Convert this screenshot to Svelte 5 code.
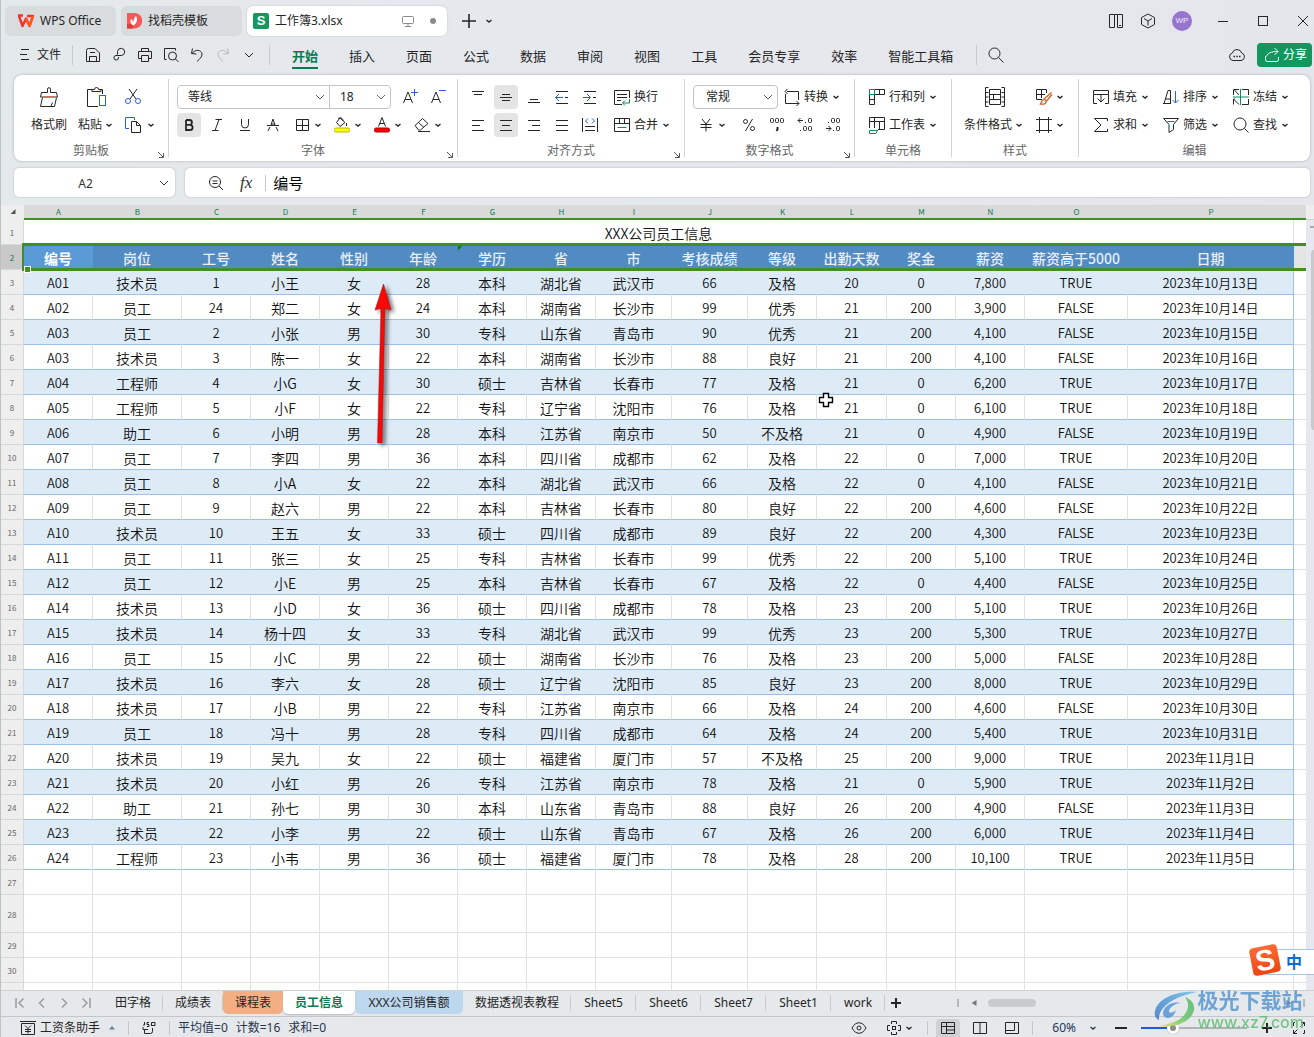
<script>
  // name: [width, height, inner markup]
  const icons = {
    chev: [12, 12, '<path stroke-width="1.400" d="M3.500 5L6 7l2.500-2"/>'],
    chevL: [14, 12, '<path d="M3 4l4 4 4-4"/>'],
    wps: [18, 14, '<path d="M1 1.500h5M2 2l3.500 10L9 4.500l3.500 7.500L16 2h-6" stroke="#f5302c" stroke-width="2.400" stroke-linejoin="round"/><path d="M9 4.500l3.500 7.500L16 2" stroke="#ff5a1c" stroke-width="2.400" stroke-linejoin="round"/>'],
    docer: [16, 16, '<path d="M1 0h7.500a7.500 7.500 0 0 1 0 15.500H1z" fill="#f5595a" stroke="none"/><path d="M1 11h6v4.500H1z" fill="#e03c3c" stroke="none"/><path d="M7.500 12.500c-3-1.500-3.500-4-2.500-6.500 1.500 1 2 2 2.500 3.500C7.500 7 8 4.500 10 3c2 3.500 1 7-2.500 9.500z" fill="#fff" stroke="none"/>'],
    monitor: [14, 14, '<rect x="1.500" y="2.500" width="11" height="7" rx="1"/><path d="M4 12.500h6M7 10v2"/>'],
    plus: [16, 16, '<path stroke-width="1.600" d="M8 1v14M1 8h14"/>'],
    plusS: [12, 12, '<path stroke-width="2" d="M6 1v10M1 6h10"/>'],
    minusS: [14, 12, '<path stroke-width="2" d="M1 6h12"/>'],
    panel: [16, 16, '<path d="M6.500 14.500h-5v-13h5zM9.500 14.500h5v-13h-5zM6.500 1.500h3M11 12.500h2"/>'],
    cube: [16, 16, '<path d="M8 1l6.500 3.500v7L8 15l-6.500-3.500v-7zM4 5.500L8 8l4-2.500M8 8v4.500"/>'],
    min: [12, 12, '<path d="M1 6.500h10"/>'],
    max: [12, 12, '<rect x="1.500" y="1.500" width="9" height="9"/>'],
    close: [12, 12, '<path d="M1 1l10 10M11 1L1 11"/>'],
    menu: [10, 12, '<path d="M1 .5h8M0 5.500h7M1 10.500h8"/>'],
    save: [16, 16, '<path d="M1.500 3.500v11h13V6L10 1.500H3.500a2 2 0 0 0-2 2zM4.500 14V9.500h7V14M5 5.500h5"/>'],
    link: [16, 16, '<path d="M6.500 7.500V4.500a3.600 3.600 0 1 1 3.500 4H5a2.300 2.300 0 1 0 2.500 2.500v-1"/>'],
    print: [16, 16, '<path d="M4.500 5V1.500h7V5M4.500 11.500h-3v-7h13v7h-3M4.500 8.500h7v6h-7z"/>'],
    preview: [16, 16, '<path d="M3.500 12.500h-2v-11h11v2"/><circle cx="9.500" cy="9" r="4"/><path d="M12.500 12l3 3"/>'],
    undo: [16, 16, '<path d="M3.500 1.500l-1 5 5 .5M3 6.500C6 2 12.500 2.500 13 7c.2 3-2.500 5-5 7.500"/>'],
    redo: [16, 16, '<path d="M12.500 1.500l1 5-5 .5M13 6.500C10 2 3.500 2.500 3 7c-.2 3 2.500 5 5 7.500"/>'],
    search: [16, 16, '<circle cx="6.500" cy="6.500" r="5.500"/><path d="M10.500 10.500l5 5"/>'],
    cloud: [18, 16, '<path d="M5 13.500a3.800 3.800 0 0 1-.8-7.400 5 5 0 0 1 9.600 0 3.800 3.800 0 0 1-.8 7.400z"/><path stroke-width="1.500" d="M5.500 9.500h1.500M8.300 9.500h1.500M11 9.500h1.500"/>'],
    share: [16, 16, '<path d="M1.500 9v3.500a2 2 0 0 0 2 2h9a2 2 0 0 0 2-2V10M2.500 9.500C3.500 6 7 4.500 14 4.500M10.500 1l3.500 3.500L10.500 8"/>'],
    brush: [20, 22, '<path d="M8.500 6.500V3.200a1.500 1.500 0 0 1 3 0v3.300h6l1 4.500H1.500l1-4.500zM3.500 11.500L1.500 20.500h14l2-9M12 20l1.500-3.500"/><path stroke="#d0703c" d="M5 10.500h10"/>'],
    paste: [22, 22, '<path d="M6 3.500H1.500v17H12M13 3.500h3.500V8M6 5.500v-2h2.500a2 2 0 0 1 4 0H15v2z"/><rect x="13.500" y="9.500" width="6" height="10" stroke="#2b5fe0"/>'],
    cut: [18, 18, '<path d="M5 1l7 10M13 1L6 11"/><g stroke="#2b5fe0"><circle cx="4" cy="13" r="2.500"/><circle cx="14" cy="13" r="2.500"/></g>'],
    copy: [18, 18, '<path stroke="#2b5fe0" d="M5 12.500H1.500v-11h9V4"/><path d="M7.500 5.500h5l4 4v7h-9zM12.500 5.500v4h4"/>'],
    bold: [18, 18, '<path stroke-width="1.800" d="M6 4v10h4a2.500 2.500 0 0 0 0-5.200H6M6 4h3.500a2.400 2.400 0 0 1 0 4.800"/>'],
    italic: [18, 18, '<path d="M7.500 3.500h6.500M4 14.500h6.500M11 3.500l-4 11"/>'],
    underline: [18, 18, '<path d="M5.500 3v5.500a3.500 3.500 0 0 0 7 0V3M4 14.500h10"/>'],
    strike: [18, 18, '<path d="M3 9.500h12M9 3L7 9M9 3l2 6M6 11l-2 4M12 11l2 4M7 8h4"/>'],
    border: [18, 18, '<path d="M3.500 3.500h12v11h-12zM9.500 3.500v11M3.500 9.500h12"/>'],
    fill: [18, 18, '<path d="M7 2l5 4.500-5 4L3.500 6.500zM5 3c2-2.500 5-1 5 2M13.500 7v3"/><rect x="1.500" y="12" width="15" height="4" rx="1.500" fill="#ffff00" stroke="#b8b800"/>'],
    color: [18, 18, '<path d="M5.500 10.500L9 1.500l3.500 9M6.800 7.500h4.500"/><rect x="1.500" y="12" width="15" height="4" rx="1.500" fill="#ff0000" stroke="#b00000"/>'],
    eraser: [18, 18, '<path d="M2 9.500L9.500 2.500l5.500 5-7.500 6.500H5.500zM5.500 6.500l5.500 5M5 15.500h12"/>'],
    aplus: [18, 18, '<path d="M2.500 15L7 4l4.500 11M4 11.500h6"/><path stroke="#2b5fe0" d="M10 4.500h7M13.500 1v7"/>'],
    aminus: [18, 18, '<path d="M2.500 15L7 4l4.500 11M4 11.500h6"/><path stroke="#2b5fe0" d="M10 2.500h7"/>'],
    top: [18, 18, '<path d="M3 3.500h12M5 6.500h8"/>'],
    middle: [18, 18, '<path d="M5 6.500h8M3 9.500h12M5 12.500h8"/>'],
    bottom: [18, 18, '<path d="M5 11.500h8M3 14.500h12"/>'],
    outdent: [18, 18, '<path d="M3 3.500h12M3 15.500h12M12 9.500h3"/><path stroke="#2b5fe0" d="M2.500 9.500H10M6 6L2.500 9.500 6 13"/>'],
    indent: [18, 18, '<path d="M3 3.500h12M3 15.500h12M12 9.500h3"/><path stroke="#2b5fe0" d="M2 9.500h7M6 6l3.500 3.500L6 13"/>'],
    left: [18, 18, '<path d="M3 4.500h12M3 9.500h8M3 14.500h12"/>'],
    center: [18, 18, '<path d="M3 4.500h12M5 9.500h8M3 14.500h12"/>'],
    right: [18, 18, '<path d="M3 4.500h12M7 9.500h8M3 14.500h12"/>'],
    justify: [18, 18, '<path d="M3 4.500h12M3 9.500h12M3 14.500h12"/>'],
    spread: [18, 18, '<path d="M1.500 2v14M16.500 2v14M4 10.500h10M4 14.500h10"/><path stroke="#2b5fe0" d="M7 2.500L4.500 5 7 7.500M11 2.500L13.500 5 11 7.500"/>'],
    wrap: [18, 18, '<path d="M9 16.500H1.500v-14h15V10M4 6.500h10M4 9.500h10M4 12.500h4"/><path stroke="#0f8a5f" d="M16.500 11v4H10M12 12.500L9.500 15l2.500 2.500"/>'],
    merge: [18, 18, '<path d="M1.500 2.500h15v13h-15zM1.500 7.500h15M6.500 2.500v5M11.500 2.500v5"/><path stroke="#0f8a5f" d="M4.500 11.500h9"/>'],
    convert: [18, 18, '<path d="M4 3.500h11.500V12M2.500 6v9.500H16M4.500 1L2 3.500 4.500 6M13.500 13l2.500 2.500-2.500 2.500"/>'],
    yen: [18, 18, '<path d="M5 3l4 5 4-5M9 8v7.500M3.500 8.500h11M3.500 11.500h11"/>'],
    percent: [18, 18, '<circle cx="5.500" cy="5.500" r="2"/><circle cx="12.500" cy="12.500" r="2"/><path d="M12.500 3l-7 12"/>'],
    thousands: [18, 18, '<rect x="2.500" y="2.500" width="3" height="4" rx="1"/><rect x="7.500" y="2.500" width="3" height="4" rx="1"/><rect x="12.500" y="2.500" width="3" height="4" rx="1"/><path stroke-width="2" d="M9.500 11v2.500l-1 1.500"/>'],
    decUp: [18, 18, '<path d="M2 4.500h5M4.500 2L2 4.500 4.500 7M9.500 6v1M4.500 14v1"/><rect x="12.500" y="2.500" width="3" height="4" rx="1"/><rect x="7.500" y="10.500" width="3" height="4" rx="1"/><rect x="12.500" y="10.500" width="3" height="4" rx="1"/>'],
    decDown: [18, 18, '<path d="M2 12.500h5M4.500 10L7 12.500 4.500 15M4.500 6v1M9.500 14v1"/><rect x="7.500" y="2.500" width="3" height="4" rx="1"/><rect x="12.500" y="2.500" width="3" height="4" rx="1"/><rect x="12.500" y="10.500" width="3" height="4" rx="1"/>'],
    rowcol: [18, 18, '<path d="M6.500 1.500h10v5h-10M11.500 1.500v5M1.500 6.500v10h5v-10M1.500 11.500h5"/><path stroke="#0f8a5f" d="M1.500 1.500h5v5h-5z"/>'],
    sheet: [18, 18, '<path d="M1.500 12V1.500h15v12H10M1.500 5.500h15M6.500 1.500V12M11.500 5.500v8"/><path stroke="#0f8a5f" d="M1.500 14.500h8l-1.500 3H1.500z"/>'],
    condfmt: [20, 20, '<path d="M3.500 .5h-3v19h3M.5 5.500h3M.5 10h3M.5 15h3M16.500 .5h3v19h-3M19.500 5.500h-3M19.500 10h-3M19.500 15h-3M4.500 2.500h11v5h-11zM4.500 7.500h4v5h-4zM8.500 7.500h7v5h-7zM4.500 12.500h11v5h-11z"/>'],
    tablestyle: [18, 18, '<path d="M7 11.500H1.500v-10h10V5M1.500 6.500H10M6.500 1.500V10"/><path stroke="#d0602c" stroke-width="1.300" d="M16.500 4.500L9 11l2.500 2L17 6.500M8.500 12c-2 0-1.500 2-3 4 3 .5 6 0 5.500-3"/>'],
    cellstyle: [18, 18, '<path d="M4.500 1v16M13.500 1v16M1 3.500h16M1 14.500h16"/>'],
    fillin: [18, 18, '<path d="M1.500 2.500h15v4h-15zM5 15.500H1.500v-9M13 15.500h3.500v-9M9 6.500V14M5.500 10.500L9 14l3.500-3.500"/>'],
    sum: [18, 18, '<path d="M15.500 5V2.500H2.500L9 9l-6.500 6.500h13V13"/>'],
    sort: [18, 18, '<path d="M2 15.500L6 2.500H8.500v13M3.500 11h5M1 15.500h8"/><path stroke="#2b5fe0" d="M13.500 3v12M10.500 12l3 3 3-3"/>'],
    filter: [18, 18, '<path d="M1.500 2.500h15L11.500 8.500v5L7 16.500v-8z"/><path stroke="#0f8a5f" d="M5.500 5.500h7"/>'],
    freeze: [18, 18, '<path d="M7 1.500H2l5 5.500M1.500 1.500V7M1.500 11v5.500M7 16.500L1.500 11H3M10 1.500h6.500V7M16.500 11v5.500H10"/><path stroke="#0f8a5f" d="M8.500 1v16M1 9h16"/>'],
    find: [18, 18, '<circle cx="8" cy="8" r="6"/><path d="M12.500 12.500l4 4"/>'],
    launch: [8, 8, '<path d="M1 1l5 5M6.500 2v4.500H2"/>'],
    zoomout: [16, 16, '<circle cx="7" cy="7" r="5.500"/><path d="M4.500 6h5M4.500 8.500h5M11 11l4 4"/>'],
    first: [12, 12, '<path stroke-width="1.500" d="M2 1v10M9.500 1.500L5 6l4.500 4.500"/>'],
    prev: [12, 12, '<path stroke-width="1.500" d="M8 1.500L3.500 6 8 10.500"/>'],
    next: [12, 12, '<path stroke-width="1.500" d="M4 1.500L8.500 6 4 10.500"/>'],
    last: [12, 12, '<path stroke-width="1.500" d="M10 1v10M2.500 1.500L7 6l-4.500 4.500"/>'],
    triL: [6, 8, '<path fill="currentColor" stroke="none" d="M5.500 1v6L.5 4z"/>'],
    triR: [6, 8, '<path fill="currentColor" stroke="none" d="M.5 1v6l5-3z"/>'],
    triU: [8, 6, '<path fill="#6a7fa8" stroke="none" d="M1 4.500h6L4 1z"/>'],
    pay: [16, 14, '<path d="M0 .5h16M1.500 2.500h13v11h-13zM5 4.500l3 3 3-3M8 7.500v5M5 8.500h6M5 10.500h6"/>'],
    script: [16, 14, '<path d="M3.500 1v3H2M8 1.500H6v2h2v2H6M10.500 5V1.500H14v3h-3M2 8.500h5M2 6v2.500M3.500 8.500v4h6a2 2 0 0 0 2-2V7"/>'],
    eye: [16, 14, '<path d="M1 7c3.500-7 10.500-7 14 0-3.500 7-10.500 7-14 0z"/><circle cx="8" cy="7" r="2"/>'],
    focus: [14, 14, '<rect x="5.500" y="5.500" width="3" height="3"/><path d="M4.500 3V.5h5V3M4.500 11v2.500h5V11M3 4.500H.5v5H3M11 4.500h2.500v5H11"/>'],
    normal: [14, 12, '<path d="M.5 .5h13v11H.5zM.5 4.500h13M5.500 .5v11M5.500 8h8"/>'],
    pages: [14, 12, '<path d="M.5 .5h13v11H.5zM7 .5v11"/>'],
    breaks: [14, 12, '<path d="M.5 .5h13v11H.5zM.5 8.500h9v-8"/>'],
    full: [14, 14, '<path d="M9 1.500h3.500V5M12.500 1.500l-4 4M1.500 9v3.500H5M1.500 12.500l4-4M1.500 5V1.500H3M12.500 9v3.500H11"/>'],
    corner: [8, 8, '<path fill="#555" stroke="none" d="M6.500 1v5h-5z"/>'],
  };

  const menus = ['开始', '插入', '页面', '公式', '数据', '审阅', '视图', '工具', '会员专享', '效率', '智能工具箱'];
  const quick = [['save', '保存'], ['link', '链接'], ['print', '打印'], ['preview', '打印预览'], ['undo', '撤销'], ['redo', '恢复'], ['chevL', '更多']];
  const edits = [
    ['fillin', '填充'], ['sort', '排序'], ['freeze', '冻结'],
    ['sum', '求和'], ['filter', '筛选'], ['find', '查找'],
  ];

  const cols = 'ABCDEFGHIJKLMNOP'.split('');
  const heads = ['编号', '岗位', '工号', '姓名', '性别', '年龄', '学历', '省', '市', '考核成绩', '等级', '出勤天数', '奖金', '薪资', '薪资高于5000', '日期'];
  const rows = `A01 技术员 1 小王 女 28 本科 湖北省 武汉市 66 及格 20 0 7,800 TRUE 2023年10月13日
A02 员工 24 郑二 女 24 本科 湖南省 长沙市 99 优秀 21 200 3,900 FALSE 2023年10月14日
A03 员工 2 小张 男 30 专科 山东省 青岛市 90 优秀 21 200 4,100 FALSE 2023年10月15日
A03 技术员 3 陈一 女 22 本科 湖南省 长沙市 88 良好 21 200 4,100 FALSE 2023年10月16日
A04 工程师 4 小G 女 30 硕士 吉林省 长春市 77 及格 21 0 6,200 TRUE 2023年10月17日
A05 工程师 5 小F 女 22 专科 辽宁省 沈阳市 76 及格 21 0 6,100 TRUE 2023年10月18日
A06 助工 6 小明 男 28 本科 江苏省 南京市 50 不及格 21 0 4,900 FALSE 2023年10月19日
A07 员工 7 李四 男 36 本科 四川省 成都市 62 及格 22 0 7,000 TRUE 2023年10月20日
A08 员工 8 小A 女 22 本科 湖北省 武汉市 66 及格 22 0 4,100 FALSE 2023年10月21日
A09 员工 9 赵六 男 22 本科 吉林省 长春市 80 良好 22 200 4,600 FALSE 2023年10月22日
A10 技术员 10 王五 女 33 硕士 四川省 成都市 89 良好 22 200 4,300 FALSE 2023年10月23日
A11 员工 11 张三 女 25 专科 吉林省 长春市 99 优秀 22 200 5,100 TRUE 2023年10月24日
A12 员工 12 小E 男 25 本科 吉林省 长春市 67 及格 22 0 4,400 FALSE 2023年10月25日
A14 技术员 13 小D 女 36 硕士 四川省 成都市 78 及格 23 200 5,100 TRUE 2023年10月26日
A15 技术员 14 杨十四 女 33 专科 湖北省 武汉市 99 优秀 23 200 5,300 TRUE 2023年10月27日
A16 员工 15 小C 男 22 硕士 湖南省 长沙市 76 及格 23 200 5,000 FALSE 2023年10月28日
A17 技术员 16 李六 女 28 硕士 辽宁省 沈阳市 85 良好 23 200 8,000 TRUE 2023年10月29日
A18 技术员 17 小B 男 22 专科 江苏省 南京市 66 及格 24 200 4,600 FALSE 2023年10月30日
A19 员工 18 冯十 男 28 专科 四川省 成都市 64 及格 24 200 5,400 TRUE 2023年10月31日
A20 技术员 19 吴九 女 22 硕士 福建省 厦门市 57 不及格 25 200 9,000 TRUE 2023年11月1日
A21 技术员 20 小红 男 26 专科 江苏省 南京市 78 及格 21 0 5,900 TRUE 2023年11月2日
A22 助工 21 孙七 男 30 本科 山东省 青岛市 88 良好 26 200 4,900 FALSE 2023年11月3日
A23 技术员 22 小李 男 22 硕士 山东省 青岛市 67 及格 26 200 6,000 TRUE 2023年11月4日
A24 工程师 23 小韦 男 36 硕士 福建省 厦门市 78 及格 28 200 10,100 TRUE 2023年11月5日`
    .split('\n')
    .map((line) => line.split(' '));
  const blanks = [27, 28, 29, 30, ''];
  const plain = /^[\dA-Z,]+$|日$/;

  const sheets = [
    ['田字格', ''], ['成绩表', ''], ['课程表', 'orange'], ['员工信息', 'current'],
    ['XXX公司销售额', 'blue long'], ['数据透视表教程', 'long'],
    ['Sheet5', 'latin'], ['Sheet6', 'latin'], ['Sheet7', 'latin'], ['Sheet1', 'latin'], ['work', ''],
  ];
</script>

{#snippet icon(name)}
  <svg class="icon" width={icons[name][0]} height={icons[name][1]} viewBox="0 0 {icons[name][0]} {icons[name][1]}" fill="none" stroke="currentColor" aria-hidden="true">{@html icons[name][2]}</svg>
{/snippet}

{#snippet tool(name, label, on = false)}
  <button class="sq" class:on aria-label={label}>{@render icon(name)}</button>
{/snippet}

{#snippet drop(name, label)}
  <button class="drop" aria-label={label}>{@render icon(name)}{@render icon('chev')}</button>
{/snippet}

{#snippet text(name, label, arrow = true)}
  <button class="tool">{@render icon(name)}<span>{label}</span>{#if arrow}{@render icon('chev')}{/if}</button>
{/snippet}

<div class="app">
  <header class="title">
    <button class="doc home">{@render icon('wps')}<span>WPS Office</span></button>
    <button class="doc docer">{@render icon('docer')}<span>找稻壳模板</span></button>
    <button class="doc active"><b class="slogo">S</b><span class="name">工作簿3.xlsx</span>{@render icon('monitor')}<i class="dot"></i></button>
    <button class="bare new" aria-label="新建">{@render icon('plus')}</button>
    <button class="bare" aria-label="新建菜单">{@render icon('chev')}</button>
    <div class="window">
      <button class="bare" aria-label="侧栏">{@render icon('panel')}</button>
      <button class="bare" aria-label="应用">{@render icon('cube')}</button>
      <button class="avatar">WP</button>
      <div class="controls">
        <button class="bare" aria-label="最小化">{@render icon('min')}</button>
        <button class="bare" aria-label="最大化">{@render icon('max')}</button>
        <button class="bare" aria-label="关闭">{@render icon('close')}</button>
      </div>
    </div>
  </header>

  <nav class="menubar">
    <button class="file">{@render icon('menu')}<span>文件</span></button>
    <i class="sep"></i>
    <div class="quick">
      {#each quick as [name, label]}
        <button class="bare" class:dim={name === 'redo'} aria-label={label}>{@render icon(name)}</button>
      {/each}
    </div>
    <i class="sep"></i>
    <div class="menus">
      {#each menus as m, i}<button class="menu" class:current={i === 0}>{m}</button>{/each}
    </div>
    <i class="sep"></i>
    <button class="bare find" aria-label="搜索">{@render icon('search')}</button>
    <div class="right">
      <button class="bare" aria-label="云同步">{@render icon('cloud')}</button>
      <button class="share">{@render icon('share')}<span>分享</span></button>
    </div>
  </nav>

  <section class="ribbon">
    <div class="group clip">
      <div class="body">
        <button class="big"><span class="pic">{@render icon('brush')}</span><span class="cap">格式刷</span></button>
        <button class="big pastebtn"><span class="pic">{@render icon('paste')}</span><span class="cap">粘贴{@render icon('chev')}</span></button>
        <div class="stack">
          <button class="cutbtn" aria-label="剪切">{@render icon('cut')}</button>
          {@render drop('copy', '复制')}
        </div>
      </div>
      <div class="label">剪贴板</div>
      <button class="launch" aria-label="剪贴板设置">{@render icon('launch')}</button>
    </div>

    <div class="group font">
      <div class="lines">
        <div class="line">
          <label class="combo family"><select aria-label="字体"><option>等线</option></select>{@render icon('chevL')}</label>
          <label class="combo size"><select aria-label="字号"><option>18</option></select>{@render icon('chevL')}</label>
          <div class="line inner">{@render tool('aplus', '增大字号')}{@render tool('aminus', '减小字号')}</div>
        </div>
        <div class="line gap">
          {@render tool('bold', '加粗', true)}{@render tool('italic', '倾斜')}{@render tool('underline', '下划线')}{@render tool('strike', '删除线')}
          <div class="drops">
            {@render drop('border', '边框')}{@render drop('fill', '填充颜色')}{@render drop('color', '字体颜色')}{@render drop('eraser', '清除')}
          </div>
        </div>
      </div>
      <div class="label">字体</div>
      <button class="launch" aria-label="字体设置">{@render icon('launch')}</button>
    </div>

    <div class="group align">
      <div class="lines">
        <div class="line gap">
          {@render tool('top', '顶端对齐')}{@render tool('middle', '垂直居中', true)}{@render tool('bottom', '底端对齐')}{@render tool('outdent', '减少缩进')}{@render tool('indent', '增加缩进')}
          <div class="tail">{@render text('wrap', '换行', false)}</div>
        </div>
        <div class="line gap">
          {@render tool('left', '左对齐')}{@render tool('center', '水平居中', true)}{@render tool('right', '右对齐')}{@render tool('justify', '两端对齐')}{@render tool('spread', '分散对齐')}
          <div class="tail">{@render text('merge', '合并')}</div>
        </div>
      </div>
      <div class="label">对齐方式</div>
      <button class="launch" aria-label="对齐设置">{@render icon('launch')}</button>
    </div>

    <div class="group number">
      <div class="lines">
        <div class="line">
          <label class="combo format"><select aria-label="数字格式"><option>常规</option></select>{@render icon('chevL')}</label>
          <div class="conv">{@render text('convert', '转换')}</div>
        </div>
        <div class="line gap num">
          {@render drop('yen', '货币')}
          <div class="line gap pct">{@render tool('percent', '百分比')}{@render tool('thousands', '千位分隔')}{@render tool('decUp', '增加小数位')}{@render tool('decDown', '减少小数位')}</div>
        </div>
      </div>
      <div class="label">数字格式</div>
      <button class="launch" aria-label="数字设置">{@render icon('launch')}</button>
    </div>

    <div class="group cells">
      <div class="lines">
        {@render text('rowcol', '行和列')}
        {@render text('sheet', '工作表')}
      </div>
      <div class="label">单元格</div>
    </div>

    <div class="group styles">
      <div class="body">
        <button class="big"><span class="pic">{@render icon('condfmt')}</span><span class="cap">条件格式{@render icon('chev')}</span></button>
        <div class="stack">{@render drop('tablestyle', '表格样式')}{@render drop('cellstyle', '单元格样式')}</div>
      </div>
      <div class="label">样式</div>
    </div>

    <div class="group edit">
      <div class="edits">
        {#each edits as [name, label]}{@render text(name, label)}{/each}
      </div>
      <div class="label">编辑</div>
    </div>
  </section>

  <section class="formula">
    <label class="namebox"><input aria-label="名称框" value="A2" />{@render icon('chevL')}</label>
    <div class="fxbox">
      <button class="bare" aria-label="缩小">{@render icon('zoomout')}</button>
      <button class="bare fx">fx</button>
      <i class="sep"></i>
      <input aria-label="编辑栏" value="编号" />
    </div>
  </section>

  <main class="work">
    <div class="grid">
      <table>
        <colgroup>
          <col class="rh" />
          {#each cols as c}<col class="c{c}" />{/each}
          <col />
        </colgroup>
        <thead>
          <tr class="letters">
            <th class="corner">{@render icon('corner')}</th>
            {#each cols as c}<th>{c}</th>{/each}
            <th></th>
          </tr>
        </thead>
        <tbody>
          <tr>
            <th>1</th>
            <td class="caption" colspan="16">XXX公司员工信息</td>
            <td></td>
          </tr>
          <tr class="heads">
            <th>2<i class="frame"></i><i class="handle"></i></th>
            {#each heads as h, i}<td class:note={i === 6}>{h}</td>{/each}
            <td></td>
          </tr>
          {#each rows as r, i}
            <tr class="data" class:stripe={i % 2 === 0}>
              <th>{i + 3}</th>
              {#each r as v}<td class:plain={plain.test(v)}>{v}</td>{/each}
              <td></td>
            </tr>
          {/each}
          {#each blanks as n}
            <tr class:tall={n === 28}>
              <th>{n}</th>
              {#each cols as c}<td></td>{/each}
              <td></td>
            </tr>
          {/each}
        </tbody>
      </table>
    </div>
    <div class="vscroll"><div class="vtrack"><i class="split"></i><i class="vthumb"></i></div></div>

    <svg class="arrow" width="40" height="180" viewBox="0 0 40 180" aria-hidden="true">
      <path d="M18.500 5L26 31l-6-1.500-3 134.500h-4.500L16 29.500 10 31z" fill="#f90808" stroke="#a01010" stroke-width=".5" />
    </svg>
    <svg class="cursor" width="18" height="18" viewBox="0 0 18 18" aria-hidden="true">
      <path d="M6.500 2.500h5v4h4v5h-4v4h-5v-4h-4v-5h4z" fill="#fff" stroke="#000" stroke-width="1.400" />
    </svg>
    <div class="ime"><span>中</span></div>
    <b class="imelogo">S</b>
  </main>

  <div class="tabs">
    <div class="nav">
      <button class="bare" aria-label="第一个">{@render icon('first')}</button>
      <button class="bare" aria-label="上一个">{@render icon('prev')}</button>
      <button class="bare" aria-label="下一个">{@render icon('next')}</button>
      <button class="bare" aria-label="最后一个">{@render icon('last')}</button>
    </div>
    {#each sheets as [name, kind]}<button class="sheet {kind}">{name}</button>{/each}
    <button class="bare add" aria-label="新建工作表">{@render icon('plusS')}</button>
    <div class="hscroll">
      <i class="grip"></i>{@render icon('triL')}
      <div class="htrack"><i class="hthumb"></i></div>
      {@render icon('triR')}<i class="grip"></i>
    </div>
  </div>

  <footer class="status">
    <button class="helper">{@render icon('pay')}<span>工资条助手</span>{@render icon('triU')}</button>
    <i class="sep"></i>
    <button class="bare js" aria-label="脚本">{@render icon('script')}</button>
    <i class="sep"></i>
    <div class="stats"><span>平均值=0</span><span>计数=16</span><span>求和=0</span></div>
    <div class="views">
      <button class="bare eye" aria-label="护眼">{@render icon('eye')}</button>
      <button class="bare focus" aria-label="阅读">{@render icon('focus')}{@render icon('chev')}</button>
      <i class="sep"></i>
      <button class="view on" aria-label="普通视图">{@render icon('normal')}</button>
      <button class="view" aria-label="页面布局">{@render icon('pages')}</button>
      <button class="view" aria-label="分页预览">{@render icon('breaks')}</button>
      <i class="sep"></i>
      <button class="zoom"><span>60%</span>{@render icon('chev')}</button>
      <button class="bare" aria-label="缩小显示">{@render icon('minusS')}</button>
      <input class="slider" type="range" min="0" max="100" value="28" aria-label="缩放" />
      <button class="bare" aria-label="放大显示">{@render icon('plusS')}</button>
      <button class="bare fullbtn" aria-label="全屏">{@render icon('full')}</button>
    </div>
  </footer>

  <div class="mark">
    <svg width="44" height="36" viewBox="0 0 44 36" aria-hidden="true">
      <defs>
        <linearGradient id="mb" x1="0" y1="1" x2="1" y2="0"><stop offset="0" stop-color="#3f78c4" /><stop offset="1" stop-color="#6cc0ee" /></linearGradient>
        <linearGradient id="mg" x1="0" y1="1" x2="1" y2="0"><stop offset="0" stop-color="#d8dc50" /><stop offset=".5" stop-color="#6cc46a" /><stop offset="1" stop-color="#4cb868" /></linearGradient>
      </defs>
      <path d="M43 1C26-1 4 6 1 20c-1 5 1 8 4 9C4 17 18 6 43 1z" fill="url(#mb)" />
      <path d="M9 22c1-7 9-12 17-10-6 1-10 4-11 8 0 3 4 2 7-1-1 5-5 8-8 8-3 0-5-2-5-5z" fill="#5796d8" />
      <path d="M31 6c8 3 12 10 7 18-6 9-20 13-33 11 13-2 22-6 26-12 4-6 4-12 0-17z" fill="url(#mg)" />
    </svg>
    <div><strong>极光下载站</strong><em>www.xz7.com</em></div>
  </div>
</div>

<style>
  :global(body) { margin: 0; }
  :global(*) { box-sizing: border-box; }
  .app {
    position: relative;
    display: flex;
    flex-direction: column;
    height: 100vh;
    overflow: hidden;
    background: linear-gradient(90deg, #e4e9eb, #e6e8ee 60%, #e4e6ec);
    border-left: 1px solid #bfc1c3;
    color: #262626;
    font: 12px/16px "Noto Sans", "Noto Sans CJK SC", sans-serif;
  }
  button, input, select { font: inherit; color: inherit; }
  button {
    display: flex;
    align-items: center;
    padding: 0;
    border: 0;
    background: none;
    white-space: nowrap;
  }
  .icon { display: block; flex: none; }
  .bare { flex: none; justify-content: center; }
  .sep { flex: none; width: 1px; height: 20px; background: #c6c9cd; }

  .title { display: flex; align-items: center; flex: none; height: 37px; padding: 6px 5px 1px 4px; }
  .doc { height: 30px; border-radius: 6px; background: #d9dcdf; margin-right: 5px; }
  .home { width: 111px; padding-left: 12px; gap: 5px; }
  .docer { width: 121px; padding-left: 5px; gap: 6px; }
  .active { width: 200px; padding: 0 11px 0 6px; gap: 6px; background: #fff; box-shadow: 0 0 2px #b8bbc0; }
  .active .name { flex: 1; text-align: left; }
  .active .icon { color: #888; margin-right: 9px; }
  .slogo { width: 16px; height: 16px; border-radius: 2px; background: #12985f; color: #fff; font: bold 13px/16px "Liberation Sans", sans-serif; }
  .dot { width: 6px; height: 6px; border-radius: 3px; background: #8c8c8c; }
  .new { margin: 0 6px 0 9px; }
  .window { display: flex; align-items: center; gap: 16px; margin-left: auto; }
  .window .avatar { justify-content: center; width: 20px; height: 20px; border-radius: 10px; background: #9575cd; color: #f0eaff; font: 8px/20px "Liberation Sans", sans-serif; }
  .controls { display: flex; gap: 28px; margin-left: 9px; }

  .menubar { display: flex; align-items: center; flex: none; height: 38px; padding: 0 2px 2px 19px; }
  .file { gap: 7px; margin-right: 11px; }
  .quick { display: flex; margin: 0 7px 0 7px; }
  .quick .bare { width: 26px; height: 24px; }
  .dim { color: #b5b8bc; }
  .menus { display: flex; gap: 31px; margin: 0 23px 0 22px; font-size: 13px; }
  .menu { height: 27px; padding-top: 3px; border-bottom: 2px solid transparent; }
  .menu.current { border-color: #0b7a50; color: #0b7a50; font-weight: 700; }
  .find { margin-left: 11px; }
  .right { display: flex; align-items: center; gap: 11px; margin-left: auto; }
  .share { height: 24px; gap: 3px; padding: 0 5px 0 7px; border-radius: 4px; background: #12985f; color: #fff; }

  .ribbon {
    display: flex;
    flex: none;
    height: 86px;
    margin: 0 4px 0 13px;
    padding: 4px 0;
    border-radius: 8px;
    background: #fff;
    box-shadow: 0 0 3px #a9adb3;
  }
  .group { position: relative; flex: none; padding: 6px 0 0 8px; border-right: 1px solid #d4d4d4; }
  .clip { width: 155px; }
  .font { width: 289px; }
  .align { width: 227px; }
  .number { width: 170px; }
  .cells { width: 97px; }
  .styles { width: 127px; }
  .edit { flex: 1; border-right: 0; }
  .label { position: absolute; left: 0; right: 0; bottom: -2px; text-align: center; color: #666; line-height: 16px; }
  .launch { position: absolute; right: 3px; bottom: -2px; color: #555; }
  .body { display: flex; }
  .lines, .stack { display: flex; flex-direction: column; gap: 4px; }
  .line { display: flex; height: 24px; align-items: center; }
  .line.gap { gap: 4px; }
  .sq { flex: none; justify-content: center; width: 24px; height: 24px; border-radius: 4px; }
  .sq.on { background: #e4e4e4; }
  .drop { width: 34px; height: 24px; gap: 1px; }
  .tool { height: 24px; gap: 2px; }
  .tool span { padding-left: 1px; }
  .big { flex-direction: column; gap: 4px; }
  .pic, .cap { display: flex; align-items: center; height: 24px; }
  .cap { gap: 1px; }
  .clip .body { padding-left: 9px; gap: 11px; }
  .clip .stack { margin-left: -2px; }
  .clip .drop { gap: 3px; }
  .cutbtn { height: 24px; }
  .combo { display: grid; height: 24px; align-items: center; }
  .combo > select, .combo > :global(.icon) { grid-area: 1 / 1; }
  .combo > :global(.icon) { justify-self: end; margin-right: 3px; color: #666; pointer-events: none; }
  .combo select { width: 100%; height: 24px; padding: 0 10px; border: 1px solid #c4c4c4; border-radius: 4px; background: #fff; appearance: none; }
  .family { width: 153px; }
  .family select { border-radius: 4px 0 0 4px; }
  .size { width: 62px; margin-left: -1px; }
  .size select { border-radius: 0 4px 4px 0; }
  .format { width: 85px; }
  .format select { padding: 0 12px; }
  .inner { gap: 4px; margin-left: 7px; }
  .drops { display: flex; gap: 6px; margin-left: 4px; }
  .tail { margin-left: 7px; }
  .conv { margin-left: 5px; }
  .num { padding-left: 4px; }
  .pct { margin-left: 2px; }
  .cells { padding-left: 13px; }
  .styles .body { padding-left: 4px; gap: 10px; }
  .edit { padding-left: 13px; }
  .edits { display: grid; grid-template-columns: repeat(3, 70px); gap: 4px 0; }

  .formula { display: flex; flex: none; gap: 10px; height: 44px; padding: 7px 4px 8px 13px; }
  .namebox, .fxbox { display: flex; align-items: center; height: 29px; border-radius: 5px; background: #fff; box-shadow: 0 0 2px #a9adb3; }
  .namebox { flex: none; width: 161px; padding-right: 4px; color: #333; }
  .namebox input { width: 100%; padding: 2px 0 0; border: 0; background: none; text-align: center; }
  .fxbox { flex: 1; padding-left: 23px; }
  .fxbox .fx { margin: 0 13px 0 16px; color: #333; font: italic 17px/20px "Liberation Serif", serif; }
  .fxbox .sep { height: 16px; }
  .fxbox input { flex: 1; min-width: 0; padding: 1px 7px 0; border: 0; background: none; color: #000; font-size: 15px; }

  .work { position: relative; display: flex; flex: 1; min-height: 0; background: #eee; }
  .grid { flex: 1; min-width: 0; overflow: hidden; background: #fff; }
  table { width: 100%; table-layout: fixed; border-collapse: separate; border-spacing: 0; font-family: "Noto Sans CJK SC", sans-serif; }
  .rh { width: 23px; }
  .cA, .cC, .cD, .cE, .cF, .cG, .cH, .cK, .cM, .cN { width: 69px; }
  .cB { width: 89px; }
  .cI, .cJ { width: 76px; }
  .cL { width: 70px; }
  .cO { width: 103px; }
  .cP { width: 166px; }
  td, th {
    height: 25px;
    padding: 2px 0 0;
    border-right: 1px solid #e1e1e1;
    border-bottom: 1px solid #e1e1e1;
    text-align: center;
    font-size: 14px;
    line-height: 20px;
    font-weight: 350;
    white-space: nowrap;
    color: #111;
  }
  tbody th { background: #eee; color: #666; font-size: 8px; font-weight: 400; border-color: #d8d8d8; }
  .letters th { height: 15px; padding: 1px 0 0; border: 0; border-bottom: 2px solid #3f8f22; background: #dadada; color: #0b7a50; font-size: 8px; font-weight: 400; line-height: 12px; }
  .letters .corner { background: #eee; border-color: #eee; padding-left: 8px; }
  .heads { position: relative; }
  .heads th { background: #c9c9c9; color: #0b7a50; }
  .heads td { border-color: #528bc2; background: #528bc2; color: #e8eef5; font-weight: 500; }
  .heads td:nth-child(2) { border-color: #5b9bd5; background: #5b9bd5; color: #fff; font-weight: 700; }
  .heads td:last-child { background: #e4e4e4; border-color: #e4e4e4; }
  .frame { position: absolute; left: 21px; right: 0; top: -2px; bottom: -1px; border: 3px solid #3f8f22; border-width: 3px 0 3px 2px; }
  .handle { position: absolute; left: 23px; bottom: -3px; width: 7px; height: 7px; border: 1px solid #fff; background: #3f8f22; }
  .heads .note { background: linear-gradient(135deg, #0a7d1a 0 4px, transparent 4px), #528bc2; }
  .data td { border-bottom-color: #9bc2e6; }
  .data td:last-child { border-bottom-color: #e1e1e1; }
  .data td:nth-child(17) { border-right-color: #9bc2e6; }
  .data .plain { font-size: 13px; }
  .stripe td { background: #ddebf7; border-right-color: #ddebf7; }
  .stripe td:last-child { background: #fff; }
  .tall td, .tall th { height: 38px; }
  td:last-child { border-right: 0; }

  .vscroll { flex: none; width: 8px; padding-top: 14px; overflow: hidden; }
  .vtrack { display: flex; flex-direction: column; align-items: flex-end; height: 100%; padding-top: 6px; background: #e5e8ee; border-top: 1px solid #d2d2d2; }
  .split { width: 4px; height: 2px; background: #aaa; }
  .vthumb { width: 3px; height: 180px; margin-top: 22px; border-radius: 3px 0 0 3px; background: #c8c9cd; }
  .arrow { position: absolute; left: 364px; top: 74px; filter: drop-shadow(3px 2px 2px rgba(0, 0, 0, 0.55)); }
  .cursor { position: absolute; left: 816px; top: 186px; }
  .ime { position: absolute; right: 0; bottom: 15px; width: 48px; height: 26px; padding-left: 19px; border: 1px solid #a8c4e0; border-right: 0; background: #fff; color: #0a6ad0; font-size: 16px; line-height: 24px; font-weight: 700; }
  .imelogo { position: absolute; right: 35px; bottom: 16px; width: 28px; height: 28px; border-radius: 4px; background: linear-gradient(#ff6a35, #ec4510); color: #fff; font: bold 29px/28px "Liberation Sans", sans-serif; text-align: center; transform: rotate(-11deg); }

  .tabs { display: flex; align-items: stretch; flex: none; height: 27px; padding-bottom: 2px; border-top: 1px solid #cfd2d5; border-bottom: 1px solid #c3c6ca; background: #e5e9ec; }
  .nav { display: flex; align-items: center; gap: 10px; width: 102px; padding-left: 13px; color: #9a9da0; }
  .sheet { position: relative; flex: none; justify-content: center; min-width: 54px; padding: 0 12px; border-radius: 0 0 5px 5px; color: #262626; }
  .sheet::after { content: ""; position: absolute; right: 0; top: 4px; bottom: 3px; width: 1px; background: #c8cbce; }
  .sheet.long { min-width: 108px; }
  .sheet.latin { min-width: 65px; }
  .orange { background: #f4ae84; }
  .blue { background: #bdd7ee; }
  .current.sheet { background: #fff; color: #0b7a50; font-weight: 700; box-shadow: 0 1px 2px #b5b8bb; }
  .orange::after, .blue::after, .current::after { display: none; }
  .add { width: 22px; }
  .hscroll { display: flex; align-items: center; flex: 1; margin: 0 9px 0 50px; color: #777; }
  .grip { width: 2px; height: 8px; background: #b4b7bb; }
  .hscroll .icon { margin: 0 11px 0 12px; }
  .htrack { flex: 1; }
  .hthumb { display: block; width: 48px; height: 8px; border-radius: 4px; background: #c9cacc; }

  .status { display: flex; align-items: center; flex: none; height: 20px; padding: 2px 8px 0 19px; background: #e5e9ec; }
  .status .sep { height: 14px; background: #c3c6ca; }
  .helper { gap: 4px; margin-right: 12px; }
  .helper .icon:last-child { margin-left: 4px; }
  .js { width: 40px; }
  .stats { display: flex; gap: 8px; margin-left: 8px; color: #2a3550; }
  .views { display: flex; align-items: center; margin-left: auto; }
  .eye { margin-right: 20px; }
  .focus { gap: 2px; margin-right: 12px; }
  .view { justify-content: center; width: 24px; height: 18px; margin-left: 8px; border-radius: 4px 4px 0 0; }
  .view.on { background: #cfd2d5; }
  .view + .sep { margin-left: 8px; }
  .zoom { gap: 11px; margin: 0 15px 0 19px; color: #26365a; }
  .slider { width: 106px; height: 14px; margin: 0 14px 0 13px; background: none; appearance: none; }
  .slider::-webkit-slider-runnable-track { height: 2px; background: linear-gradient(90deg, #2558e0 28%, #b0b3b6 28%); }
  .slider::-webkit-slider-thumb { width: 12px; height: 12px; margin-top: -5px; border: 3px solid #fff; border-radius: 6px; background: #8c8c8c; box-shadow: 0 0 1px #888; appearance: none; }
  .fullbtn { margin-left: 19px; }

  .mark { position: absolute; right: 10px; bottom: 6px; display: flex; align-items: center; opacity: 0.85; pointer-events: none; }
  .mark strong { display: block; color: #5b97d0; font-size: 21px; line-height: 26px; }
  .mark em { display: block; color: #62bd72; font: normal 500 16px/18px Inter, "Liberation Sans", sans-serif; }
</style>
